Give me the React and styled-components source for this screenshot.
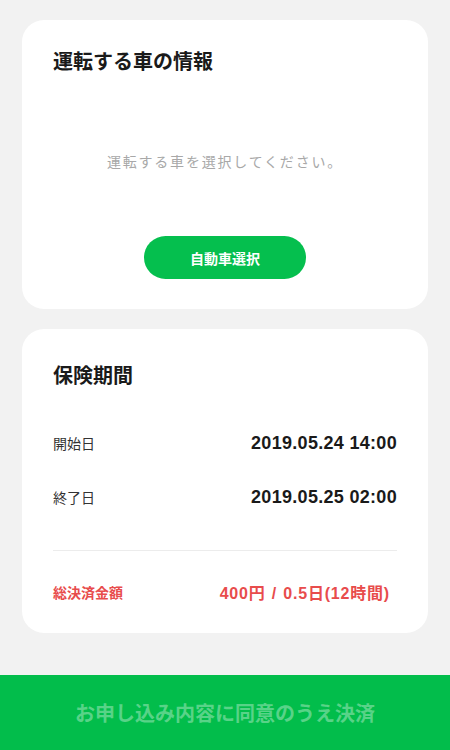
import React from "react";
import styled, { createGlobalStyle } from "styled-components";

const GlobalStyle = createGlobalStyle`
  html, body {
    margin: 0;
    padding: 0;
    background: #f2f2f2;
  }
  body {
    font-family: "Liberation Sans", "Noto Sans CJK JP", sans-serif;
    color: #1a1a1a;
  }
`;

const Page = styled.div`
  display: flex;
  flex-direction: column;
  min-height: 100vh;
  padding: 20px 22px 0;
  box-sizing: border-box;
`;

const Card = styled.section`
  display: flex;
  flex-direction: column;
  background: #fff;
  border-radius: 22px;
  padding: ${(p) => p.$pad};
  & + & {
    margin-top: 20px;
  }
`;

const Title = styled.h2`
  margin: 0;
  font-size: 20px;
  line-height: 28px;
  font-weight: 700;
  color: #1a1a1a;
`;

const Placeholder = styled.p`
  margin: 75px 0 0;
  text-align: center;
  font-family: "Noto Sans CJK JP", sans-serif;
  font-size: 14px;
  line-height: 20px;
  letter-spacing: 1.8px;
  color: #a8a8a8;
`;

const SelectButton = styled.button`
  align-self: center;
  margin-top: 65px;
  width: 162px;
  height: 43px;
  border: none;
  border-radius: 22px;
  background: #05bf4e;
  color: #fff;
  font-family: inherit;
  font-size: 14px;
  font-weight: 700;
`;

const Row = styled.div`
  display: flex;
  justify-content: space-between;
  align-items: center;
  height: 24px;
  margin-top: ${(p) => p.$top}px;
`;

const Label = styled.span`
  font-size: 14px;
  color: ${(p) => (p.$accent ? "#e84c4c" : "#333")};
  font-weight: ${(p) => (p.$accent ? 700 : 400)};
`;

const Value = styled.span`
  font-size: ${(p) => (p.$accent ? 16 : 18)}px;
  font-weight: 700;
  letter-spacing: ${(p) => (p.$accent ? 0.8 : 0.3)}px;
  word-spacing: ${(p) => (p.$accent ? 1 : 0)}px;
  color: ${(p) => (p.$accent ? "#e84c4c" : "#1a1a1a")};
  padding-right: ${(p) => (p.$accent ? 7 : 0)}px;
`;

const Divider = styled.hr`
  margin: 41px 0 0;
  border: none;
  border-top: 1px solid #ececec;
`;

const BottomBar = styled.button`
  margin: auto -22px 0;
  height: 75px;
  border: none;
  background: #02bd4b;
  color: rgba(255, 255, 255, 0.35);
  font-family: inherit;
  font-size: 20px;
  font-weight: 700;
`;

export default function App() {
  return (
    <>
      <GlobalStyle />
      <Page>
        <Card $pad="28px 31px 30px">
          <Title>運転する車の情報</Title>
          <Placeholder>運転する車を選択してください。</Placeholder>
          <SelectButton>自動車選択</SelectButton>
        </Card>
        <Card $pad="33px 31px 29px">
          <Title>保険期間</Title>
          <Row $top={41}>
            <Label>開始日</Label>
            <Value>2019.05.24 14:00</Value>
          </Row>
          <Row $top={30}>
            <Label>終了日</Label>
            <Value>2019.05.25 02:00</Value>
          </Row>
          <Divider />
          <Row $top={29}>
            <Label $accent>総決済金額</Label>
            <Value $accent>400円 / 0.5日(12時間)</Value>
          </Row>
        </Card>
        <BottomBar disabled>お申し込み内容に同意のうえ決済</BottomBar>
      </Page>
    </>
  );
}
